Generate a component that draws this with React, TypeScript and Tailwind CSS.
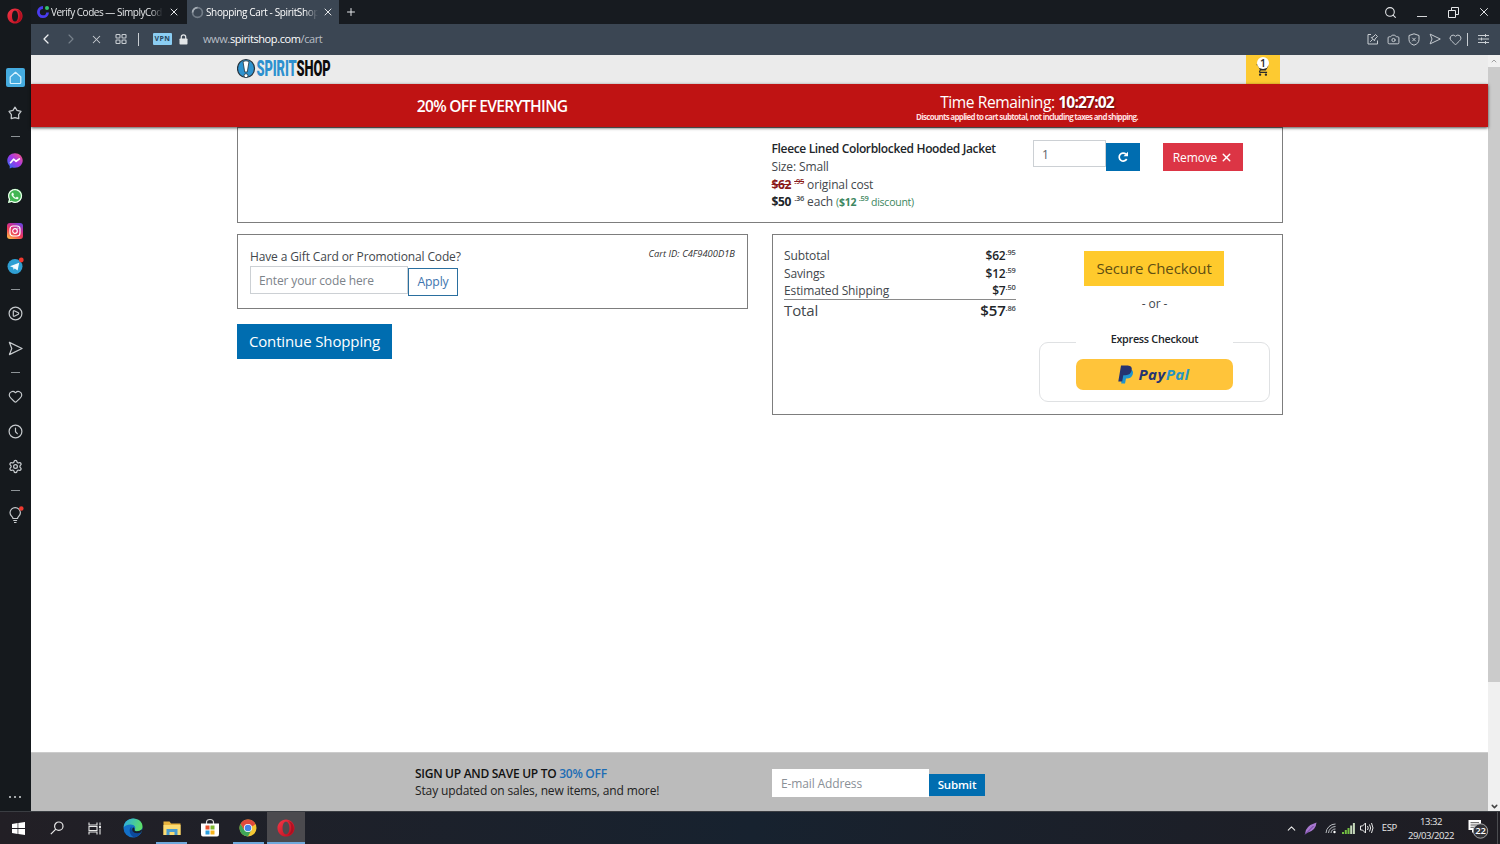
import React from "react";
import {
  Camera,
  ChevronDown,
  ChevronLeft,
  ChevronRight,
  ChevronUp,
  Heart,
  Plus,
  Search,
  Settings,
  X,
} from "lucide-react";
import { FaWhatsapp } from "react-icons/fa";
import { MdShoppingCart } from "react-icons/md";

type Kids = { children?: React.ReactNode };

function OperaLogo({ size }: { size: number }) {
  return (
    <svg width={size} height={size} viewBox="0 0 20 20">
      <defs>
        <linearGradient id="op" x1="0" y1="0" x2="1" y2="1">
          <stop offset="0" stopColor="#f53848" />
          <stop offset="1" stopColor="#b80a1c" />
        </linearGradient>
      </defs>
      <path
        fillRule="evenodd"
        fill="url(#op)"
        d="M10 0.5C15 .5 19.5 4.5 19.5 10S15 19.5 10 19.5.5 15.5.5 10 5 .5 10 .5ZM10 3C7.700 3 6.200 6 6.200 10S7.700 17 10 17s3.800-3 3.800-7S12.300 3 10 3Z"
      />
      <path d="M11.500 2.500c3 .5 4.300 4 4.300 7.500s-1.300 7-4.300 7.500c5 .3 7-4 7-7.500s-2-7.800-7-7.500Z" fill="#9d0b1a" opacity=".6" />
    </svg>
  );
}

function SendIcon({ size }: { size: number }) {
  return (
    <svg width={size} height={size} viewBox="0 0 16 16" fill="none" stroke="currentColor" strokeWidth="1.300" strokeLinejoin="round">
      <path d="M1.500 1.500 15 8 1.500 14.500 4 8Z" />
    </svg>
  );
}

function Side({ children }: Kids) {
  return <div className="relative flex h-[35px] w-full shrink-0 items-center justify-center">{children}</div>;
}

function Dash() {
  return (
    <div className="flex h-[13px] w-full shrink-0 items-center justify-center">
      <div className="h-px w-[9px] bg-[#8d9397]" />
    </div>
  );
}

function Sidebar() {
  return (
    <aside className="flex w-[31px] shrink-0 flex-col items-center bg-[#15191d] pr-[1px] text-[#c6cacd]">
      <div className="flex h-[31px] items-center">
        <OperaLogo size={16} />
      </div>
      <div className="h-[29.300px] shrink-0" />
      <Side>
        <div className="flex h-[19px] w-[19px] items-center justify-center rounded-[2px] bg-[#45abdf] text-[#d8f2ff]">
          <svg width="13" height="14" viewBox="0 0 13 14" fill="none" stroke="currentColor" strokeWidth="1.200" strokeLinejoin="round">
            <path d="M6.500 1.300 1.200 6v5.500q0 1 1 1h8.600q1 0 1-1V6Z" />
          </svg>
        </div>
      </Side>
      <Side>
        <svg width="14" height="14" viewBox="0 0 14 14" fill="none" stroke="currentColor" strokeWidth="1.250" strokeLinejoin="round">
          <path d="M7 1.200 9 4.300 13 5.400 10.600 8.600 10.800 12.600 7 11.600 3.200 12.600 3.400 8.600 1 5.400 5 4.300Z" />
        </svg>
      </Side>
      <Dash />
      <Side>
        <svg width="16" height="16" viewBox="0 0 16 16">
          <defs>
            <linearGradient id="ms" x1="0" y1="1" x2="1" y2="0">
              <stop offset="0" stopColor="#1d72f5" />
              <stop offset=".5" stopColor="#a236ea" />
              <stop offset="1" stopColor="#ff5a78" />
            </linearGradient>
          </defs>
          <path d="M8 .3C3.600.3.300 3.500.300 7.600c0 2.200.9 4 2.400 5.300v2.600l2.400-1.100c.9.300 1.900.4 2.900.4 4.400 0 7.700-3.100 7.700-7.200S12.400.3 8 .3Z" fill="url(#ms)" />
          <path d="m3.500 9.700 3.100-3.500 2.500 2.100 3.300-2.400" fill="none" stroke="#fff" strokeWidth="1.700" strokeLinejoin="round" strokeLinecap="round" />
        </svg>
      </Side>
      <Side>
        <div className="relative flex h-[16px] w-[16px] items-center justify-center">
          <svg className="absolute inset-0" width="16" height="16" viewBox="0 0 16 16">
            <circle cx="8.200" cy="7.800" r="7" fill="#41b653" />
            <path d="M1 15 2 10.500 5 14Z" fill="#41b653" />
          </svg>
          <FaWhatsapp className="relative" size={16} color="#f4fff4" />
        </div>
      </Side>
      <Side>
        <svg width="16" height="16" viewBox="0 0 16 16">
          <defs>
            <linearGradient id="ig" x1="0.200" y1="1" x2=".8" y2="0">
              <stop offset="0" stopColor="#fdb34a" />
              <stop offset=".4" stopColor="#ee3a55" />
              <stop offset=".7" stopColor="#c52f9a" />
              <stop offset="1" stopColor="#6a45dd" />
            </linearGradient>
          </defs>
          <rect width="16" height="16" rx="3" fill="url(#ig)" />
          <rect x="3" y="3" width="10" height="10" rx="3" fill="none" stroke="#fff" strokeWidth="1.200" />
          <circle cx="8" cy="8" r="2.300" fill="none" stroke="#fff" strokeWidth="1.200" />
          <circle cx="10.900" cy="5.100" r=".7" fill="#fff" />
        </svg>
      </Side>
      <Side>
        <svg width="18" height="18" viewBox="0 0 18 18">
          <circle cx="9" cy="9.500" r="7.500" fill="#2f9fd3" />
          <path d="M4 9.300 13.200 5.700 11.600 13.400 8.800 11.500 7.500 12.800 7.200 10.500Z" fill="#f3fbff" />
          <circle cx="15.300" cy="3" r="2.400" fill="#f0392f" />
        </svg>
      </Side>
      <Dash />
      <Side>
        <svg width="15" height="15" viewBox="0 0 15 15" fill="none" stroke="currentColor" strokeWidth="1.200" strokeLinejoin="round">
          <circle cx="7.500" cy="7.500" r="6.400" />
          <path d="M5.300 5.500q0-1 1-.7l4 2q.8.7 0 1.400l-4 2q-1 .3-1-.7Z" />
        </svg>
      </Side>
      <Side>
        <SendIcon size={15} />
      </Side>
      <Dash />
      <Side>
        <Heart size={15} strokeWidth={1.900} />
      </Side>
      <Side>
        <svg width="15" height="15" viewBox="0 0 15 15" fill="none" stroke="currentColor" strokeWidth="1.200" strokeLinecap="round">
          <circle cx="7.500" cy="7.500" r="6.400" />
          <path d="M7.500 4v3.700l1.800 2" />
        </svg>
      </Side>
      <Side>
        <Settings size={15} strokeWidth={2} />
      </Side>
      <Dash />
      <Side>
        <svg width="18" height="18" viewBox="0 0 18 18" fill="none" stroke="currentColor" strokeWidth="1.200">
          <path d="M7 12.500C7 10.500 4 10 4 6.800a5.200 5.200 0 0 1 10.400 0C14.400 10 11.500 10.500 11.500 12.500ZM7.300 14.500h3.800M8 16.500h2.500" />
          <circle cx="15.300" cy="2.500" r="2.300" fill="#f0392f" stroke="none" />
        </svg>
      </Side>
      <div className="flex-1" />
      <div className="mb-[13px] flex gap-[3px]">
        <i className="h-[2px] w-[2px] rounded-full bg-[#d5d8da]" />
        <i className="h-[2px] w-[2px] rounded-full bg-[#d5d8da]" />
        <i className="h-[2px] w-[2px] rounded-full bg-[#d5d8da]" />
      </div>
    </aside>
  );
}

function TabBar() {
  return (
    <div className="flex h-[24px] shrink-0 items-center bg-[#171b20] text-[10px] text-[#e4e6e8]">
      <div className="flex h-full w-[156px] items-center pl-[5px]">
        <svg width="14" height="14" viewBox="0 0 14 14">
          <path d="M7 2.500a4.600 4.600 0 1 0 4.600 5" fill="none" stroke="#4a3cf0" strokeWidth="2.800" />
          <circle cx="11" cy="3" r="2" fill="#35c46e" />
        </svg>
        <span className="ml-[1px] w-[112px] whitespace-nowrap pt-[1px] tracking-[-0.480px] [mask-image:linear-gradient(90deg,#000_88%,transparent)]">
          Verify Codes — SimplyCod
        </span>
        <X className="ml-[5px]" size={12} strokeWidth={2} />
      </div>
      <div className="flex h-full w-[152px] items-center bg-[#3b4653] pl-[4px]">
        <svg width="13" height="13" viewBox="0 0 13 13" fill="none" strokeWidth="1.700">
          <circle cx="6.500" cy="6.500" r="4.900" stroke="#727c87" />
          <path d="M1.600 6.500A4.900 4.900 0 0 1 6.500 1.600" stroke="#a7afb7" />
        </svg>
        <span className="ml-[2px] w-[112px] whitespace-nowrap pt-[1px] tracking-[-0.360px] text-white [mask-image:linear-gradient(90deg,#000_88%,transparent)]">
          Shopping Cart - SpiritShop
        </span>
        <X className="ml-[4px]" size={12} strokeWidth={2} />
      </div>
      <Plus className="ml-[6px]" size={12} strokeWidth={2} />
      <div className="flex-1" />
      <Search className="mr-[20px]" size={13} strokeWidth={2} />
      <div className="mr-[21px] mt-[9px] h-px w-[10px] bg-[#d5d7d9]" />
      <svg className="mr-[18px]" width="11" height="11" viewBox="0 0 11 11" fill="none" stroke="currentColor">
        <path d="M.5 3.500h7v7h-7ZM3.500 3V.5h7v7H8" />
      </svg>
      <X className="mr-[9px]" size={14} strokeWidth={1.700} />
    </div>
  );
}

function AddressBar() {
  return (
    <div className="flex h-[31px] shrink-0 items-center bg-[#3b4653] pb-[1px] text-[#c9ced3]">
      <ChevronLeft className="ml-[7px]" size={16} strokeWidth={1.900} color="#eef0f2" />
      <ChevronRight className="ml-[9px]" size={16} strokeWidth={1.700} color="#78828c" />
      <X className="ml-[11px]" size={13} strokeWidth={1.900} />
      <svg className="ml-[12px]" width="12" height="12" viewBox="0 0 12 12" fill="none" stroke="currentColor" strokeWidth="1.100">
        <rect x="1" y="1.500" width="4" height="3.500" rx=".8" />
        <rect x="7" y="1.500" width="4" height="3.500" rx=".8" />
        <rect x="1" y="7" width="4" height="3.500" rx=".8" />
        <rect x="7" y="7" width="4" height="3.500" rx=".8" />
      </svg>
      <div className="ml-[11px] h-[13px] w-px bg-[#c9ced3]" />
      <div className="ml-[14px] flex h-[12px] w-[19px] items-center justify-center rounded-[1px] bg-[#8bcdf2] text-[7px] font-bold leading-[12px] tracking-[0.500px] text-[#26455c]">
        VPN
      </div>
      <svg className="ml-[7px]" width="9" height="11" viewBox="0 0 9 11">
        <rect x=".5" y="4.500" width="8" height="6" rx=".8" fill="#e3e6e8" />
        <path d="M2.300 5V3a2.200 2.200 0 0 1 4.400 0v2" fill="none" stroke="#e3e6e8" strokeWidth="1.200" />
      </svg>
      <span className="ml-[15px] text-[11px] tracking-[-0.400px] text-[#b8bec5]">
        www.<span className="text-white">spiritshop.com</span>/cart
      </span>
      <div className="flex-1" />
      <svg width="12" height="12" viewBox="0 0 12 12" fill="none" stroke="currentColor" strokeWidth="1">
        <path d="M4 1.500H1v9.500h9.500V7.500M3.200 8.800 5.600 6.400M4.300 4.600l3.200 3.200.5-1.900 2.500-2.400-2-2L6 4.100Z" />
      </svg>
      <Camera className="ml-[8px]" size={13} strokeWidth={1.800} />
      <svg className="ml-[8px]" width="12" height="13" viewBox="0 0 12 13" fill="none" stroke="currentColor">
        <path d="M6 .8 11 2.500V6.500Q11 10.500 6 12.200 1 10.500 1 6.500V2.500ZM4.300 4.800l3.400 3.400M7.700 4.800 4.300 8.200" />
      </svg>
      <span className="ml-[9px]">
        <SendIcon size={12} />
      </span>
      <Heart className="ml-[8px]" size={13} strokeWidth={1.800} />
      <div className="ml-[5px] h-[13px] w-px bg-[#c9ced3]" />
      <svg className="ml-[10px] mr-[11px]" width="11" height="10" viewBox="0 0 11 10" fill="none" stroke="currentColor">
        <path d="M0 1.500h11M0 5h11M0 8.500h11M7.500 0v3M3.500 3.500v3M7.500 7v3" />
      </svg>
    </div>
  );
}

function SiteLogo() {
  return (
    <svg className="shrink-0" width="96" height="26" viewBox="0 0 96 26">
      <ellipse cx="9" cy="10.500" rx="8.500" ry="9" fill="#2f93cf" stroke="#25323c" strokeWidth="1.200" />
      <path d="M6 3.500q3-1.500 6 0L10.300 14H7.700Z" fill="#fff" stroke="#25323c" strokeWidth=".8" />
      <circle cx="9" cy="17.700" r="2" fill="#fff" stroke="#25323c" strokeWidth=".8" />
      <text x="19.500" y="18" fontFamily="Roboto, sans-serif" fontSize="21.500" fontWeight="900" fill="#2d90cf" textLength="74" lengthAdjust="spacingAndGlyphs">
        SPIRIT<tspan fill="#0d0d0d">SHOP</tspan>
      </text>
    </svg>
  );
}

function Header() {
  return (
    <>
      <div className="flex h-[29px] shrink-0 bg-[#ebebeb] pl-[206px]">
        <div className="flex w-[1009px] pt-[3px]">
          <SiteLogo />
        </div>
        <div className="relative flex w-[34px] justify-center bg-[#fdca31] text-[#2b2b2b]">
          <MdShoppingCart className="mt-[8px] mr-[1px]" size={14} />
          <span className="absolute left-[11px] top-[2px] flex h-[12px] w-[12px] items-center justify-center rounded-full bg-white text-[10.500px] font-semibold leading-none">
            1
          </span>
        </div>
      </div>
      <div className="z-10 flex h-[43px] shrink-0 bg-[#bf1313] text-white shadow-[0_1px_3px_rgba(0,0,0,0.700)]">
        <div className="flex w-[922px] items-center justify-center pt-[2px] text-[15.600px] font-semibold tracking-[-0.720px]">
          20% OFF EVERYTHING
        </div>
        <div className="flex w-[148px] flex-col items-center whitespace-nowrap pt-[8px]">
          <div className="text-[15.600px] leading-[20px] tracking-[-0.420px]">
            Time Remaining: <b className="tracking-[-0.850px] [text-shadow:1px_1px_2px_rgba(0,0,0,0.600)]">10:27:02</b>
          </div>
          <div className="text-[8px] font-bold leading-[10px] tracking-[-0.720px] text-[#ffdede]">
            Discounts applied to cart subtotal, not including taxes and shipping.
          </div>
        </div>
      </div>
    </>
  );
}

function Sup({ children, className = "" }: Kids & { className?: string }) {
  return (
    <sup className={"top-[-5px] inline-block text-[7.500px] font-semibold leading-none tracking-[-0.250px] " + className}>
      {children}
    </sup>
  );
}

function CartItem() {
  return (
    <section className="flex h-[96px] w-[1046px] shrink-0 border border-[#7d7d7d] pl-[533.500px]">
      <div className="w-[261.500px] whitespace-nowrap pt-[12.400px] leading-[17.600px]">
        <div className="font-semibold tracking-[-0.340px] text-[#212529]">Fleece Lined Colorblocked Hooded Jacket</div>
        <div>Size: Small</div>
        <div>
          <span className="text-[#8b1a1a]">
            <b className="tracking-[-0.300px] line-through">$62</b> <Sup className="line-through">.95</Sup>
          </span>{" "}
          original cost
        </div>
        <div>
          <b className="tracking-[-0.300px] text-[#212529]">$50</b> <Sup>.36</Sup> each{" "}
          <span className="text-[10.500px] tracking-[-0.250px] text-[#3d8660]">
            (<b>$12</b> <Sup>.59</Sup> discount)
          </span>
        </div>
      </div>
      <div className="mt-[12px] h-[27px] w-[73px] border border-[#ccd0d4] pl-[8px] leading-[27px] text-[#5d6369]">1</div>
      <button className="mt-[15px] flex h-[28px] w-[34px] items-center justify-center bg-[#006db0] text-white">
        <svg width="12" height="12" viewBox="0 0 12 12">
          <path d="M9.700 8A4 4 0 1 1 9 3.200" fill="none" stroke="#fff" strokeWidth="1.700" />
          <path d="M11 .8V5.200H6.500Z" fill="#fff" />
        </svg>
      </button>
      <button className="ml-[23px] mt-[15px] flex h-[28px] w-[80px] items-center justify-center gap-[3px] bg-[#dc3545] pt-[1px] text-[12px] text-white">
        Remove <X size={13} strokeWidth={2.700} />
      </button>
    </section>
  );
}

function Row({ label, dollars, cents }: { label: string; dollars: string; cents: string }) {
  return (
    <div className="flex h-[17.600px] justify-between leading-[18px]">
      <span>{label}</span>
      <span className="whitespace-nowrap">
        <b className="font-semibold text-[#212529]">{dollars}</b>
        <Sup>{cents}</Sup>
      </span>
    </div>
  );
}

function PayPalMark() {
  return (
    <svg width="17" height="19" viewBox="0 0 17 19">
      <path d="M5 4.500h7.500q3.300.8 2.300 4.800-1.200 4.200-6 4.200H8L7 18.500H3.200Z" fill="#2195cf" />
      <path d="M3 .5h6.800q4.700.3 3.900 4.800-1 4.900-6.200 4.900H5.300L4.200 16.500H.3Z" fill="#253371" />
    </svg>
  );
}

function Summary() {
  return (
    <section className="flex h-[181px] w-[511px] justify-between border border-[#7d7d7d] pl-[11px] pr-[12px] pt-[12px]">
      <div className="w-[231.500px]">
        <Row label="Subtotal" dollars="$62" cents=".95" />
        <Row label="Savings" dollars="$12" cents=".59" />
        <Row label="Estimated Shipping" dollars="$7" cents=".50" />
        <div className="-mt-px flex h-[23px] justify-between border-t border-[#8a8a8a] text-[15px] leading-[21px]">
          <span>Total</span>
          <span className="whitespace-nowrap">
            <b className="font-semibold tracking-[-0.100px] text-[#212529]">$57</b>
            <Sup>.86</Sup>
          </span>
        </div>
      </div>
      <div className="flex w-[231px] flex-col items-center pt-[4px]">
        <button className="mr-px h-[35px] w-[140px] bg-[#ffca2c] text-[15px] text-[#5f4f13]">Secure Checkout</button>
        <div className="mt-[9px] leading-[17px]">- or -</div>
        <fieldset className="mt-[19px] flex h-[71px] w-[231px] flex-col items-center rounded-[9px] border border-[#dfe1e3]">
          <legend className="mx-auto h-[22px] w-[157px] text-center text-[10.800px] font-semibold leading-[16px] tracking-[-0.280px] text-[#212529]">
            Express Checkout
          </legend>
          <button className="mt-[6px] flex h-[31px] w-[157px] shrink-0 items-center justify-center gap-[3px] rounded-[7px] bg-[#ffc43a] pr-[1px]">
            <PayPalMark />
            <span className="text-[15px] font-bold italic leading-none tracking-[0.450px] text-[#253371]">
              Pay<span className="text-[#2795c3]">Pal</span>
            </span>
          </button>
        </fieldset>
      </div>
    </section>
  );
}

function CodeCard() {
  return (
    <div className="w-[511px]">
      <section className="flex h-[75px] justify-between border border-[#7d7d7d] pl-[12px] pr-[12px] pt-[12px]">
        <div className="whitespace-nowrap">
          <div className="h-[18px] leading-[19px]">Have a Gift Card or Promotional Code?</div>
          <div className="flex">
            <div className="mt-[1px] h-[28px] w-[158px] border border-[#ccd0d4] pl-[8px] leading-[28px] text-[#7c838a]">
              Enter your code here
            </div>
            <button className="mt-[3px] h-[28px] w-[50px] border border-[#2a6f9f] pt-[1px] text-[12.200px] text-[#3d74ae]">Apply</button>
          </div>
        </div>
        <i className="text-[9.400px] leading-[13px] tracking-normal text-[#333]">Cart ID: C4F9400D1B</i>
      </section>
      <button className="mt-[15px] h-[35px] w-[155px] whitespace-nowrap bg-[#006db0] text-[15px] text-white">
        Continue Shopping
      </button>
    </div>
  );
}

function Footer() {
  return (
    <footer className="flex h-[59px] shrink-0 border-t border-[#cccccc] bg-[#bbbbbb] pl-[384px] text-[#212121]">
      <div className="w-[357px] pt-[12px] leading-[17px]">
        <div className="font-semibold tracking-[-0.280px] text-[#111]">
          SIGN UP AND SAVE UP TO <span className="text-[#1d6db4]">30% OFF</span>
        </div>
        <div>Stay updated on sales, new items, and more!</div>
      </div>
      <div className="mt-[16px] h-[28px] w-[157px] bg-white pl-[9px] leading-[29px] text-[#8a9097]">E-mail Address</div>
      <button className="mt-[21px] h-[22px] w-[56px] bg-[#006db0] text-[11.500px] font-semibold text-white">Submit</button>
    </footer>
  );
}

function ScrollBar() {
  return (
    <div className="flex w-[12px] shrink-0 flex-col items-center bg-[#f0f0f0]">
      <div className="flex h-[12px] items-center">
        <ChevronUp size={8} strokeWidth={3} color="#a0a0a0" />
      </div>
      <div className="h-[615px] w-full bg-[#cbcbcb]" />
      <div className="flex-1" />
      <div className="flex h-[10px] items-center">
        <ChevronDown size={9} strokeWidth={4} color="#444" />
      </div>
    </div>
  );
}

function Task({ children, tone = "" }: Kids & { tone?: string }) {
  return (
    <div className={"flex h-full w-[38.300px] shrink-0 justify-center " + tone}>
      <div className="flex h-full w-[31px] items-center justify-center">{children}</div>
    </div>
  );
}

function Taskbar() {
  return (
    <div className="flex h-[32px] shrink-0 items-center bg-linear-to-r from-[#221f25] via-[#17222f] to-[#1f1d23] text-[#e8e8e8]">
      <div className="flex h-full w-[37.500px] shrink-0 items-center justify-center">
        <svg width="13" height="13" viewBox="0 0 13 13" fill="#fff">
          <path d="M0 1.900 5.600 1.100V6.100H0ZM6.300 1 13 0V6.100H6.300ZM0 6.900H5.600V11.900L0 11.100ZM6.300 6.900H13V13L6.300 12Z" />
        </svg>
      </div>
      <Task>
        <svg width="14" height="14" viewBox="0 0 14 14" fill="none" stroke="currentColor" strokeWidth="1.200">
          <circle cx="8.800" cy="5.200" r="4.200" />
          <path d="M5.800 8.200 .8 13.200" />
        </svg>
      </Task>
      <Task>
        <svg width="14" height="13" viewBox="0 0 14 13" fill="none" stroke="currentColor" strokeWidth="1.100">
          <path d="M1 .5v2.500h8V.5M1 12.500V10h8v2.500M1 4.500h8v4H1ZM12 .5v3M12 6.500v6" />
          <path d="M11 4h2v2h-2Z" fill="currentColor" stroke="none" />
        </svg>
      </Task>
      <Task>
        <svg width="20" height="20" viewBox="0 0 20 20">
          <defs>
            <linearGradient id="e1" x1="0" y1="0" x2="1" y2=".3">
              <stop offset="0" stopColor="#2aa9e8" />
              <stop offset="1" stopColor="#5bdd6c" />
            </linearGradient>
          </defs>
          <circle cx="10" cy="10" r="9.500" fill="#1370c8" />
          <path d="M.6 9.500C1 4 5 .5 10.300.5c5.200 0 9.200 3.600 9.200 7.700 0 3.200-2.300 5-5 5-2.100 0-3.300-.7-2.800-1.500 1.700-2.500-.3-5.300-4-5.300C4 6.400 1.200 8 .6 9.500Z" fill="url(#e1)" />
          <path d="M8.600 8.600c-1 3.700 2.200 7.300 9.500 6.200-1.500 2.700-4.500 4.400-7 4.600-4-1.200-6.300-8-2.500-10.800Z" fill="#0d4a9c" />
          <path d="M10 9.300q1.800.5 1.600 2.400-.6 1.300 1.700 1.500 3 .2 6-2l-1 3.400q-6.700 2-8.900-1.700-.8-2 .6-3.600Z" fill="#19202a" />
        </svg>
      </Task>
      <Task tone="[&>div]:border-b-2 [&>div]:border-[#6fa9dc]">
        <svg className="mt-[2px]" width="18" height="16" viewBox="0 0 18 16">
          <path d="M.5 1.500h6l1.500 2h9.500v11.500H.5Z" fill="#e9b43f" />
          <path d="M.5 5h17v10H.5Z" fill="#fbdc74" />
          <path d="M3.500 15V9h11v6h-3v-3h-5v3Z" fill="#4b9dd0" />
        </svg>
      </Task>
      <Task>
        <svg width="18" height="20" viewBox="0 0 18 20">
          <path d="M5.500 6V4.500q0-3 3.500-3t3.500 3V6" fill="none" stroke="#ddd" strokeWidth="1.200" />
          <path d="M0 5.500h18V16q0 2.500-2 2.500H2Q0 18.500 0 16Z" fill="#fff" />
          <path d="M4.500 7.500h4v4h-4Z" fill="#e8502d" />
          <path d="M9.500 7.500h4v4h-4Z" fill="#7db82f" />
          <path d="M4.500 12.500h4v4h-4Z" fill="#2a9fe0" />
          <path d="M9.500 12.500h4v4h-4Z" fill="#f7b51c" />
        </svg>
      </Task>
      <Task tone="[&>div]:border-b-2 [&>div]:border-[#6fa9dc]">
        <svg className="mt-[2px]" width="18" height="18" viewBox="0 0 18 18">
          <circle cx="9" cy="9" r="8.500" fill="#f4c734" />
          <path d="M9 9 1.600 4.800A8.500 8.500 0 0 1 16.400 4.800Z" fill="#e04a3c" />
          <path d="M1.600 4.800A8.500 8.500 0 0 0 9 17.500L12.400 11 9 9 5.400 11Z" fill="#3fa557" />
          <path d="M9 4.900h7.400L14 7 9 9 5.300 11 1.600 4.800Z" fill="#e04a3c" />
          <circle cx="9" cy="9" r="4.100" fill="#fff" />
          <circle cx="9" cy="9" r="3.300" fill="#4583e8" />
        </svg>
      </Task>
      <div className="flex h-full w-[37.500px] items-center justify-center border-b-2 border-[#6fa9dc] bg-[#4b4a4e] pt-[2px]">
        <OperaLogo size={18} />
      </div>
      <div className="flex-1" />
      <ChevronUp size={13} strokeWidth={2} />
      <svg className="ml-[6px]" width="13" height="13" viewBox="0 0 13 13">
        <path d="M1 12Q1 4 12.500.5 12 8 4 10.500Z" fill="#a777cf" />
        <path d="M1 12.500 9.500 4" stroke="#6d3f99" />
      </svg>
      <svg className="ml-[8px]" width="11" height="12" viewBox="0 0 11 12" fill="none" stroke="#b9bcc0" strokeWidth="1">
        <path d="M1 11A9.500 9.500 0 0 1 10.500 2M3.500 11A7 7 0 0 1 10.500 4.500M6 11A4.500 4.500 0 0 1 10.500 7" />
        <circle cx="9.500" cy="10" r="1.200" fill="#fff" stroke="none" />
      </svg>
      <svg className="ml-[6px]" width="13" height="11" viewBox="0 0 13 11">
        <path d="M0 9h2v2H0ZM2.800 7h2v4h-2ZM5.500 5h2v6h-2Z" fill="#74c043" />
        <path d="M8.200 2.500h2V11h-2ZM10.900 0h2v11h-2Z" fill="#c6d9bb" />
      </svg>
      <svg className="ml-[5px]" width="14" height="12" viewBox="0 0 14 12" fill="none" stroke="currentColor" strokeWidth="1">
        <path d="M.5 4h2L5.500 1v10l-3-3h-2ZM7.500 4q1.500 2 0 4M9.500 2.500q2.300 3.500 0 7M11.500 1q3 5 0 10" />
      </svg>
      <span className="ml-[8px] text-[9.500px] tracking-[-0.300px]">ESP</span>
      <div className="ml-[8px] w-[52px] whitespace-nowrap pt-[1px] text-center text-[9.500px] leading-[14px] tracking-[-0.450px]">
        13:32
        <br />
        29/03/2022
      </div>
      <div className="relative ml-[11px] h-[22px] w-[22px]">
        <svg width="22" height="22" viewBox="0 0 22 22">
          <path d="M.5 3h12.500v10H7l-3 3v-3H.5Z" fill="#fff" />
          <path d="M2.500 5.700h8.500M2.500 8h8.500M2.500 10.300h5" stroke="#555" />
          <circle cx="12.500" cy="14" r="7.200" fill="#333338" stroke="#b4b4b4" strokeWidth=".9" />
        </svg>
        <span className="absolute left-[6.500px] top-[8px] w-[12px] text-center text-[9.500px] font-semibold leading-[12px] tracking-[-0.200px] text-white">22</span>
      </div>
      <div className="ml-[7px] h-full w-px bg-[#4b4c50]" />
      <div className="w-[2px]" />
    </div>
  );
}

export default function App() {
  return (
    <div className="flex h-[844px] w-[1500px] flex-col overflow-hidden bg-white font-['Open_Sans','Noto_Sans',sans-serif] text-[12px] tracking-[-0.130px] text-[#42474c]">
      <div className="flex h-[811px] shrink-0">
        <Sidebar />
        <div className="flex w-[1469px] flex-col">
          <TabBar />
          <AddressBar />
          <div className="flex flex-1">
            <main className="flex w-[1457px] flex-col">
              <Header />
              <div className="flex flex-1 flex-col pl-[206px]">
                <CartItem />
                <div className="mt-[11px] flex w-[1046px] justify-between">
                  <CodeCard />
                  <Summary />
                </div>
              </div>
              <Footer />
            </main>
            <ScrollBar />
          </div>
        </div>
      </div>
      <div className="h-px shrink-0 bg-[#3a3d42]" />
      <Taskbar />
    </div>
  );
}
